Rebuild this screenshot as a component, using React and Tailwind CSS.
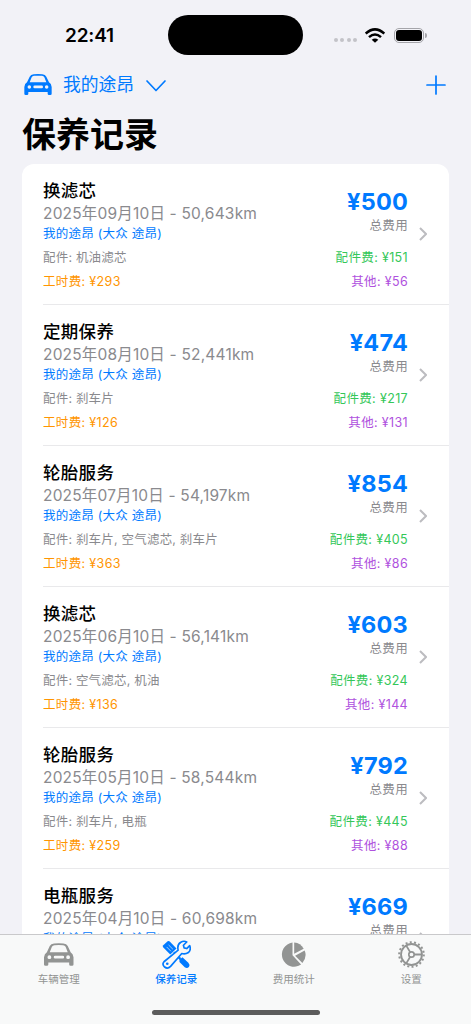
import React, { useState } from 'react';
import clsx from 'clsx';

const records = [
  { id: 1, title: '换滤芯', date: '2025年09月10日', km: '50,643', parts: '机油滤芯', labor: 293, total: 500, partsCost: 151, other: 56 },
  { id: 2, title: '定期保养', date: '2025年08月10日', km: '52,441', parts: '刹车片', labor: 126, total: 474, partsCost: 217, other: 131 },
  { id: 3, title: '轮胎服务', date: '2025年07月10日', km: '54,197', parts: '刹车片, 空气滤芯, 刹车片', labor: 363, total: 854, partsCost: 405, other: 86 },
  { id: 4, title: '换滤芯', date: '2025年06月10日', km: '56,141', parts: '空气滤芯, 机油', labor: 136, total: 603, partsCost: 324, other: 144 },
  { id: 5, title: '轮胎服务', date: '2025年05月10日', km: '58,544', parts: '刹车片, 电瓶', labor: 259, total: 792, partsCost: 445, other: 88 },
  { id: 6, title: '电瓶服务', date: '2025年04月10日', km: '60,698', total: 669 },
];

const CarIcon = ({ className }) => (
  <svg viewBox="0 0 82 63" className={className} fill="currentColor">
    <path
      fillRule="evenodd"
      d="M8 25 16 8Q19 1 28 .8Q41-.6 54 .8Q63 1 66 8L74 25Q81 29 82 39V59Q82 63 78 63H74Q70 63 70 59V54H12V59Q12 63 8 63H4Q0 63 0 59V39Q1 29 8 25ZM16 25H66L60 10Q58 6 53 5.5Q41 4.500 29 5.500Q24 6 22 10ZM15 33.500A5.300 5.300 0 1 0 15 44.100A5.300 5.300 0 1 0 15 33.500ZM67 33.500A5.300 5.300 0 1 0 67 44.100A5.300 5.300 0 1 0 67 33.500ZM31 34.800A4 4 0 0 0 31 42.800H52A4 4 0 0 0 52 34.800Z"
    />
  </svg>
);

const ToolsIcon = ({ className }) => (
  <svg viewBox="0 0 88 86" className={className} fill="none" stroke="currentColor">
    {/* screwdriver */}
    <path d="M3 16 17 3Q21 1 25 5L44 25 25 43 4 22Q1 19 3 16Z" fill="currentColor" stroke="none" />
    <path d="M14 20 27 33M20 14 33 27" stroke="#f8f8f8" strokeWidth="2" />
    <path d="M36 36 56 57" strokeWidth="7" />
    <path d="M53 59 62 51 80 68Q86 75 82 80Q77 87 69 82L53 66Z" fill="currentColor" stroke="none" />
    {/* wrench */}
    <path
      d="M6 65 49 30Q45 13 57 6Q66 0 75 5L65 15 67 23 75 25 84 16Q89 29 80 37Q71 43 60 40L26 79Q17 88 8 81Q-1 73 6 65Z"
      fill="#f8f8f8"
      strokeWidth="5"
      strokeLinejoin="round"
    />
    <circle cx="16" cy="71" r="4" fill="currentColor" stroke="none" />
  </svg>
);

const PieIcon = ({ className }) => (
  <svg viewBox="0 0 76 78" className={className} fill="currentColor">
    <path d="M35 1V40L61 68A37 37 0 1 1 35 1Z" />
    <path d="M40 1A37 37 0 0 1 69 20L40 35Z" />
    <path d="M72 25A37 37 0 0 1 65 63L43 41Z" />
  </svg>
);

const GearIcon = ({ className }) => (
  <svg viewBox="0 0 80 80" className={className} fill="none" stroke="currentColor">
    <circle cx="40" cy="40" r="31" strokeWidth="5.500" />
    <circle cx="40" cy="40" r="36.500" strokeWidth="6" strokeDasharray="5.900 6.841" />
    <circle cx="40" cy="40" r="8" strokeWidth="5" />
    <path d="M48 40H71M36 33 24 13M36 47 24 67" strokeWidth="5.500" />
  </svg>
);

const tabs = [
  { id: 'cars', label: '车辆管理', Icon: CarIcon, size: 'w-[29.5px] h-[23px]' },
  { id: 'records', label: '保养记录', Icon: ToolsIcon, size: 'w-[29px] h-[29px]' },
  { id: 'stats', label: '费用统计', Icon: PieIcon, size: 'w-[25px] h-[26px]' },
  { id: 'settings', label: '设置', Icon: GearIcon, size: 'w-[27px] h-[27px]' },
];

const StatusBar = () => (
  <div className="flex h-[69px] items-start pt-[15px]">
    <div className="flex h-10 w-[168px] items-center pl-[65px] pt-[2px] text-[19px] font-semibold tracking-[-0.2px]">22:41</div>
    <div className="h-10 w-[135px] rounded-full bg-black" />
    <div className="flex h-10 flex-1 items-center pl-[31px]">
      <div className="mt-[10px] flex gap-[2.4px]">
        <span className="size-1 rounded-full bg-[#c3c3c8]" />
        <span className="size-1 rounded-full bg-[#c3c3c8]" />
        <span className="size-1 rounded-full bg-[#c3c3c8]" />
        <span className="size-1 rounded-full bg-[#c3c3c8]" />
      </div>
      <svg viewBox="0 0 60 44" className="ml-2 h-[15px] w-5" fill="none" stroke="black">
        <path d="M2 16Q30-9 58 16" strokeWidth="7.500" />
        <path d="M12 27Q30 11 48 27" strokeWidth="7.500" />
        <path d="M20 35Q30 27 40 35L30 44Z" fill="black" stroke="none" />
      </svg>
      <div className="ml-[9px] h-[15px] w-[30px] rounded-[5px] border border-[#a5a5aa] p-px">
        <div className="h-full rounded-[3px] bg-black" />
      </div>
      <div className="ml-px h-[5px] w-[2px] rounded-r-full bg-[#a5a5aa]" />
    </div>
  </div>
);

const RecordRow = ({ record }) => (
  <div className="flex h-[141px] shrink-0 pl-[21px]">
    <div className="flex flex-1 border-b border-[#e9e9eb] pt-[15px]">
      <div className="flex-1 whitespace-nowrap">
        <h2 className="h-[24px] text-[17.500px] font-medium leading-[23px] tracking-[0.3px] text-black">{record.title}</h2>
        <p className="h-[22px] text-[15.500px] leading-[21px] tracking-[0.18px] text-[#8a8a8e]">
          {record.date} - {record.km}km
        </p>
        <p className="h-[18px] text-[12.500px] leading-[18px] tracking-[0.25px] text-[#007aff]">我的途昂 (大众 途昂)</p>
        {record.parts && (
          <p className="mt-[6px] h-[18px] text-[12.500px] leading-[18px] tracking-[0.2px] text-[#8a8a8e]">配件: {record.parts}</p>
        )}
        {record.labor && (
          <p className="mt-[6px] h-[18px] text-[12.500px] leading-[18px] tracking-[0.35px] text-[#ff9500]">工时费: ¥{record.labor}</p>
        )}
      </div>
      <div className="whitespace-nowrap pt-[8px] text-right text-[12.500px] leading-[18px] tracking-[0.35px]">
        <p className="h-[30px] text-[23.500px] font-bold leading-[30px] tracking-[0.2px] text-[#007aff]">¥{record.total}</p>
        <p className="text-[#8a8a8e]">总费用</p>
        {record.partsCost && <p className="mt-[14px] text-[#34c759]">配件费: ¥{record.partsCost}</p>}
        {record.other && <p className="mt-[6px] text-[#af52de]">其他: ¥{record.other}</p>}
      </div>
      <svg viewBox="0 0 8 14" className="ml-[11px] mr-[22px] mt-[48px] h-[14px] w-2" fill="none" stroke="#bcbcc0" strokeWidth="2">
        <path d="M1 1 7 7 1 13" />
      </svg>
    </div>
  </div>
);

const App = () => {
  const [activeTab, setActiveTab] = useState('records');

  return (
    <div className="flex h-[1024px] w-[471px] flex-col overflow-hidden bg-[#f2f2f7] font-[Inter,'Noto_Sans_CJK_SC',sans-serif] text-black">
      <StatusBar />

      <header className="flex h-[31px] items-center pl-6 pr-[25px] text-[#007aff]">
        <CarIcon className="h-[21px] w-7" />
        <button className="ml-[11px] flex items-center pt-[2px] text-[17.800px]">
          <span>我的途昂</span>
          <svg viewBox="0 0 20 12" className="ml-3 h-3 w-5" fill="none" stroke="currentColor" strokeWidth="1.700">
            <path d="M1 1 10 10.500 19 1" strokeLinecap="round" strokeLinejoin="round" />
          </svg>
        </button>
        <button className="ml-auto">
          <svg viewBox="0 0 20 20" className="size-5" stroke="currentColor" strokeWidth="1.700" strokeLinecap="round">
            <path d="M10 1V19M1 10H19" />
          </svg>
        </button>
      </header>

      <h1 className="h-[64px] pl-[22px] pt-[11px] text-[34px] font-bold leading-[48px]">保养记录</h1>

      <main className="mx-[22px] flex min-h-0 flex-1 flex-col overflow-hidden rounded-t-[12px] bg-white">
        {records.map((record) => (
          <RecordRow key={record.id} record={record} />
        ))}
      </main>

      <nav className="flex h-[90px] shrink-0 flex-col border-t border-[#c9c9cb] bg-[#f8f9f9]">
        <div className="grid h-[75px] w-[470px] grid-cols-4">
          {tabs.map(({ id, label, Icon, size }) => (
            <button
              key={id}
              onClick={() => setActiveTab(id)}
              className={clsx('flex flex-col items-center pt-[5px]', activeTab === id ? 'font-medium text-[#007aff]' : 'text-[#929493]')}
            >
              <span className="flex h-[29px] items-center">
                <Icon className={size} />
              </span>
              <span className="mt-[3px] text-[10.500px] leading-[15px]">{label}</span>
            </button>
          ))}
        </div>
        <div className="mx-auto h-[5px] w-[168px] rounded-full bg-[#5c5c5c]" />
      </nav>
    </div>
  );
};

export default App;
